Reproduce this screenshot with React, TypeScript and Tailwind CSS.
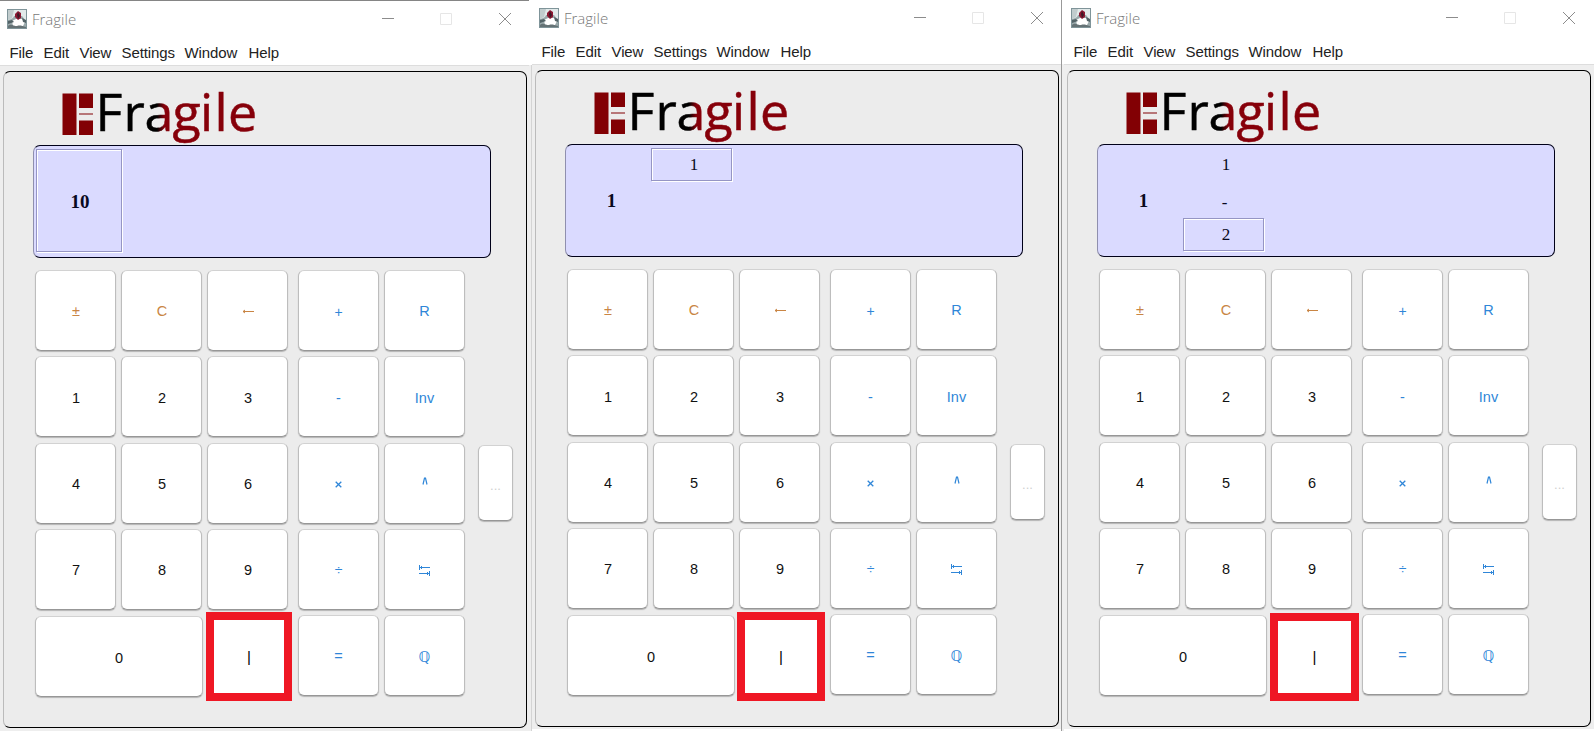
import React from "react";

type Cell = { label: string; tone: string };

const orange = "text-[#c98544]";
const dark = "text-[#111]";
const blue = "text-[#2f86d8]";

const leftRows: Cell[][] = [
  [{ label: "±", tone: orange }, { label: "C", tone: orange }, { label: "←", tone: orange }],
  [{ label: "1", tone: dark }, { label: "2", tone: dark }, { label: "3", tone: dark }],
  [{ label: "4", tone: dark }, { label: "5", tone: dark }, { label: "6", tone: dark }],
  [{ label: "7", tone: dark }, { label: "8", tone: dark }, { label: "9", tone: dark }],
];

const keyBase =
  "flex items-center justify-center rounded-[6px] border border-[#bdbdbd] border-t-[#d2d2d2] border-b-[#979797] bg-white shadow-[0_1px_1px_#b5b5b5]";

function Key({ label, tone, wide }: { label: string; tone: string; wide?: boolean }) {
  return (
    <button className={`${keyBase} h-[81px] text-[14.5px] leading-none ${tone} ${wide ? "w-[168px] pt-[3px]" : "w-[81px] pt-[2px]"}`}>
      {label === "⭾" ? <TabArrows /> : label === "∧" ? <Caret /> : label === "←" ? <BackArrow /> : label === "×" ? <Times /> : label === "ℚ" ? (
        <span className="pt-px font-['DejaVu_Sans'] text-[15px]">ℚ</span>
      ) : (
        <span className={label === "+" || label === "÷" ? "text-[14px]" : ""}>{label}</span>
      )}
    </button>
  );
}

function TabArrows() {
  return (
    <svg width="11" height="11" viewBox="0 0 11 11" fill="none" stroke="currentColor">
      <path d="M.5 0v5M1 2.500h10M3 1l-1.500 1.500 1.500 1.500M10.500 6v5M0 8.500h10M8 7l1.500 1.500-1.500 1.500" />
    </svg>
  );
}

function Caret() {
  return (
    <svg className="-mt-[6px]" width="6" height="8" viewBox="0 0 6 8" fill="none" stroke="currentColor" strokeWidth="1.2">
      <path d="M1 7.500L2.500 1h1L5 7.500" />
    </svg>
  );
}

function Times() {
  return (
    <svg width="7" height="7" viewBox="0 0 7 7" fill="none" stroke="currentColor" strokeWidth="1.300">
      <path d="M.7 .7l5.600 5.600M6.300 .7L.7 6.300" />
    </svg>
  );
}

function BackArrow() {
  return (
    <svg width="12" height="5" viewBox="0 0 12 5" fill="none" stroke="currentColor">
      <path d="M1 2.500h11M3 1L1 2.500 3 4" />
    </svg>
  );
}

function JavaIcon() {
  return (
    <svg width="20" height="20" viewBox="0 0 20 20">
      <rect width="20" height="20" fill="#7f9499" />
      <rect x="1" y="1" width="18" height="18" fill="#e2eaea" />
      <path d="M1 1h6L5 9 1 11z" fill="#c1cccd" />
      <path d="M1 11c3-1 5-1 6-4h8l4 5v7H1z" fill="#9aa9ab" />
      <path d="M5 12l4-2h6l3 3-2 4H6z" fill="#fff" />
      <path d="M8 5l3-3 3 2v5l-3 2-3-3z" fill="#8c1832" />
      <path d="M10 6l1-3 2 4-2 3z" fill="#3d1827" />
      <path d="M1 12l4-1 2 2-3 1-3 1zM15 9l4 2v3l-3-1z" fill="#536367" />
      <path d="M1 17c4-3 6 1 9 0s5 0 9 1v1H1z" fill="#657275" />
    </svg>
  );
}

function Logo({ id }: { id: string }) {
  return (
    <svg className="block overflow-visible" width="210" height="61" viewBox="0 0 210 61">
      <defs>
        <linearGradient id={id} gradientUnits="userSpaceOnUse" x1="96" y1="0" x2="103" y2="0">
          <stop offset="0" stopColor="#000" />
          <stop offset="1" stopColor="#86000a" />
        </linearGradient>
      </defs>
      <path d="M1.500 9.500h14v41.500h-14zM18 9.500h14v14.500H18zM18 29.500h14v1H18zM18 36.500h14v14.500H18z" fill="#820004" />
      <text
        x="34.500 62.500 83.500 111.500 139 153.500 167"
        y="47"
        fontFamily="Open Sans, sans-serif"
        fontSize="52"
        fill={`url(#${id})`}
        stroke={`url(#${id})`}
        strokeWidth="0.5"
      >
        Fragile
      </text>
    </svg>
  );
}

function Selected({ children, className }: { children?: React.ReactNode; className: string }) {
  return (
    <div className={`flex items-center justify-center border border-[#9595c4] shadow-[1px_1px_0_#fff,inset_1px_1px_0_#fff] ${className}`}>
      {children}
    </div>
  );
}

function Display({ step }: { step: number }) {
  return (
    <div className="flex h-[113px] w-[458px] rounded-[7px] border border-[#000018] border-l-[#8f8fae] bg-[#dadaff] pl-[2px] pt-[3px] font-['Liberation_Serif'] text-[17px] leading-none text-[#080820]">
      {step === 0 ? (
        <Selected className="h-[103px] w-[86px] pl-[2px] pt-px text-[19px] font-bold">10</Selected>
      ) : (
        <>
          <div className="flex h-[104px] w-[83px] items-center justify-center pl-[4px] text-[19px] font-bold">1</div>
          <div className="flex w-[81px] flex-col">
            {step === 1 ? (
              <Selected className="h-[33px] pl-[5px]">1</Selected>
            ) : (
              <>
                <div className="flex h-[33px] items-center justify-center pl-[5px]">1</div>
                <div className="flex h-[37px] items-center justify-center pl-[2px] pt-[5px]">-</div>
                <Selected className="h-[33px] pl-[5px]">2</Selected>
              </>
            )}
          </div>
        </>
      )}
    </div>
  );
}

const menus = [
  { label: "File", width: "w-[34px]" },
  { label: "Edit", width: "w-[36px]" },
  { label: "View", width: "w-[42px]" },
  { label: "Settings", width: "w-[63px]" },
  { label: "Window", width: "w-[64px]" },
  { label: "Help", width: "w-[40px]" },
];

function CalculatorWindow({ step, className, highlight }: { step: number; className: string; highlight: string }) {
  return (
    <section className={`flex h-[731px] shrink-0 flex-col overflow-hidden bg-[#eee] ${className}`}>
      <header className="flex h-[38px] shrink-0 items-center bg-white pb-[2px] pl-[7px]">
        <JavaIcon />
        <span className="ml-[5px] w-[349px] font-['Open_Sans'] text-[15px] font-light text-[#777]">Fragile</span>
        <svg width="132" height="14" viewBox="0 0 132 14" fill="none" stroke="#8c8c8c">
          <path d="M1 6.500h12M118 1l12 12M130 1l-12 12" />
          <path d="M59.500 1.500h11v11h-11z" stroke="#e6e6e6" />
        </svg>
      </header>
      <nav className="flex h-[26px] shrink-0 items-center bg-white pl-[9.5px] pt-px text-[15px] leading-none tracking-[-0.1px] text-[#222]">
        {menus.map((m) => (
          <span key={m.label} className={`shrink-0 whitespace-nowrap ${m.width}`}>{m.label}</span>
        ))}
      </nav>
      <div className="h-px shrink-0 bg-[#ddd]" />
      <main className="ml-[3px] mt-[5px] flex h-[657px] w-[524px] shrink-0 flex-col rounded-[7px] border border-black border-l-[#bbb] bg-[#ececec] pl-[29px]">
        <div className="h-[73px] pl-[28px] pt-[12px]">
          <Logo id={`word-${step}`} />
        </div>
        <Display step={step} />
        <div className="flex pl-[2px] pt-[12px]">
          <div className="flex flex-col gap-[5.25px]">
            {leftRows.map((row, i) => (
              <div key={i} className="flex gap-[5px] [&>button]:pl-px">
                {row.map((c) => <Key key={c.label} {...c} />)}
              </div>
            ))}
            <div className="mt-[0.75px] flex gap-[5px]">
              <Key label="0" tone={dark} wide />
              <div className="relative h-[81px] w-[81px] bg-white">
                <div className={`absolute flex items-center justify-center border-8 border-[#ef1724] bg-white text-[15px] leading-none ${highlight}`}>|</div>
              </div>
            </div>
          </div>
          <div className="ml-[9px] grid grid-cols-2 content-start gap-x-[5px] gap-y-[5.25px]">
            {["+", "R", "-", "Inv", "×", "∧", "÷", "⭾", "=", "ℚ"].map((label) => (
              <Key key={label} label={label} tone={blue} />
            ))}
          </div>
          <button className={`${keyBase} ml-[13px] mt-[174.5px] h-[76px] w-[35px] pt-[6px] text-[13px] text-[#d0d0d0]`}>...</button>
        </div>
      </main>
      {step > 0 && <div className="mt-[2px] grow bg-white" />}
    </section>
  );
}

export default function App() {
  return (
    <div className="flex h-[731px] w-[1594px] overflow-hidden bg-[#eee] font-['Liberation_Sans']">
      <CalculatorWindow step={0} className="w-[529px] border-t border-[#858585]" highlight="-left-[2px] -top-[4px] h-[89px] w-[86px]" />
      <div className="flex w-[3px] flex-col">
        <div className="h-[65px] bg-white" />
        <div className="ml-[2px] w-px grow bg-[#d4d4d4]" />
      </div>
      <CalculatorWindow step={1} className="w-[529px]" highlight="-left-[3px] -top-[3px] h-[89px] w-[88px]" />
      <div className="w-px bg-[#999]" />
      <div className="flex w-[2px] flex-col"><div className="h-[64px] bg-white" /></div>
      <CalculatorWindow step={2} className="w-[530px]" highlight="-left-[2px] -top-[2px] h-[88px] w-[89px]" />
    </div>
  );
}
